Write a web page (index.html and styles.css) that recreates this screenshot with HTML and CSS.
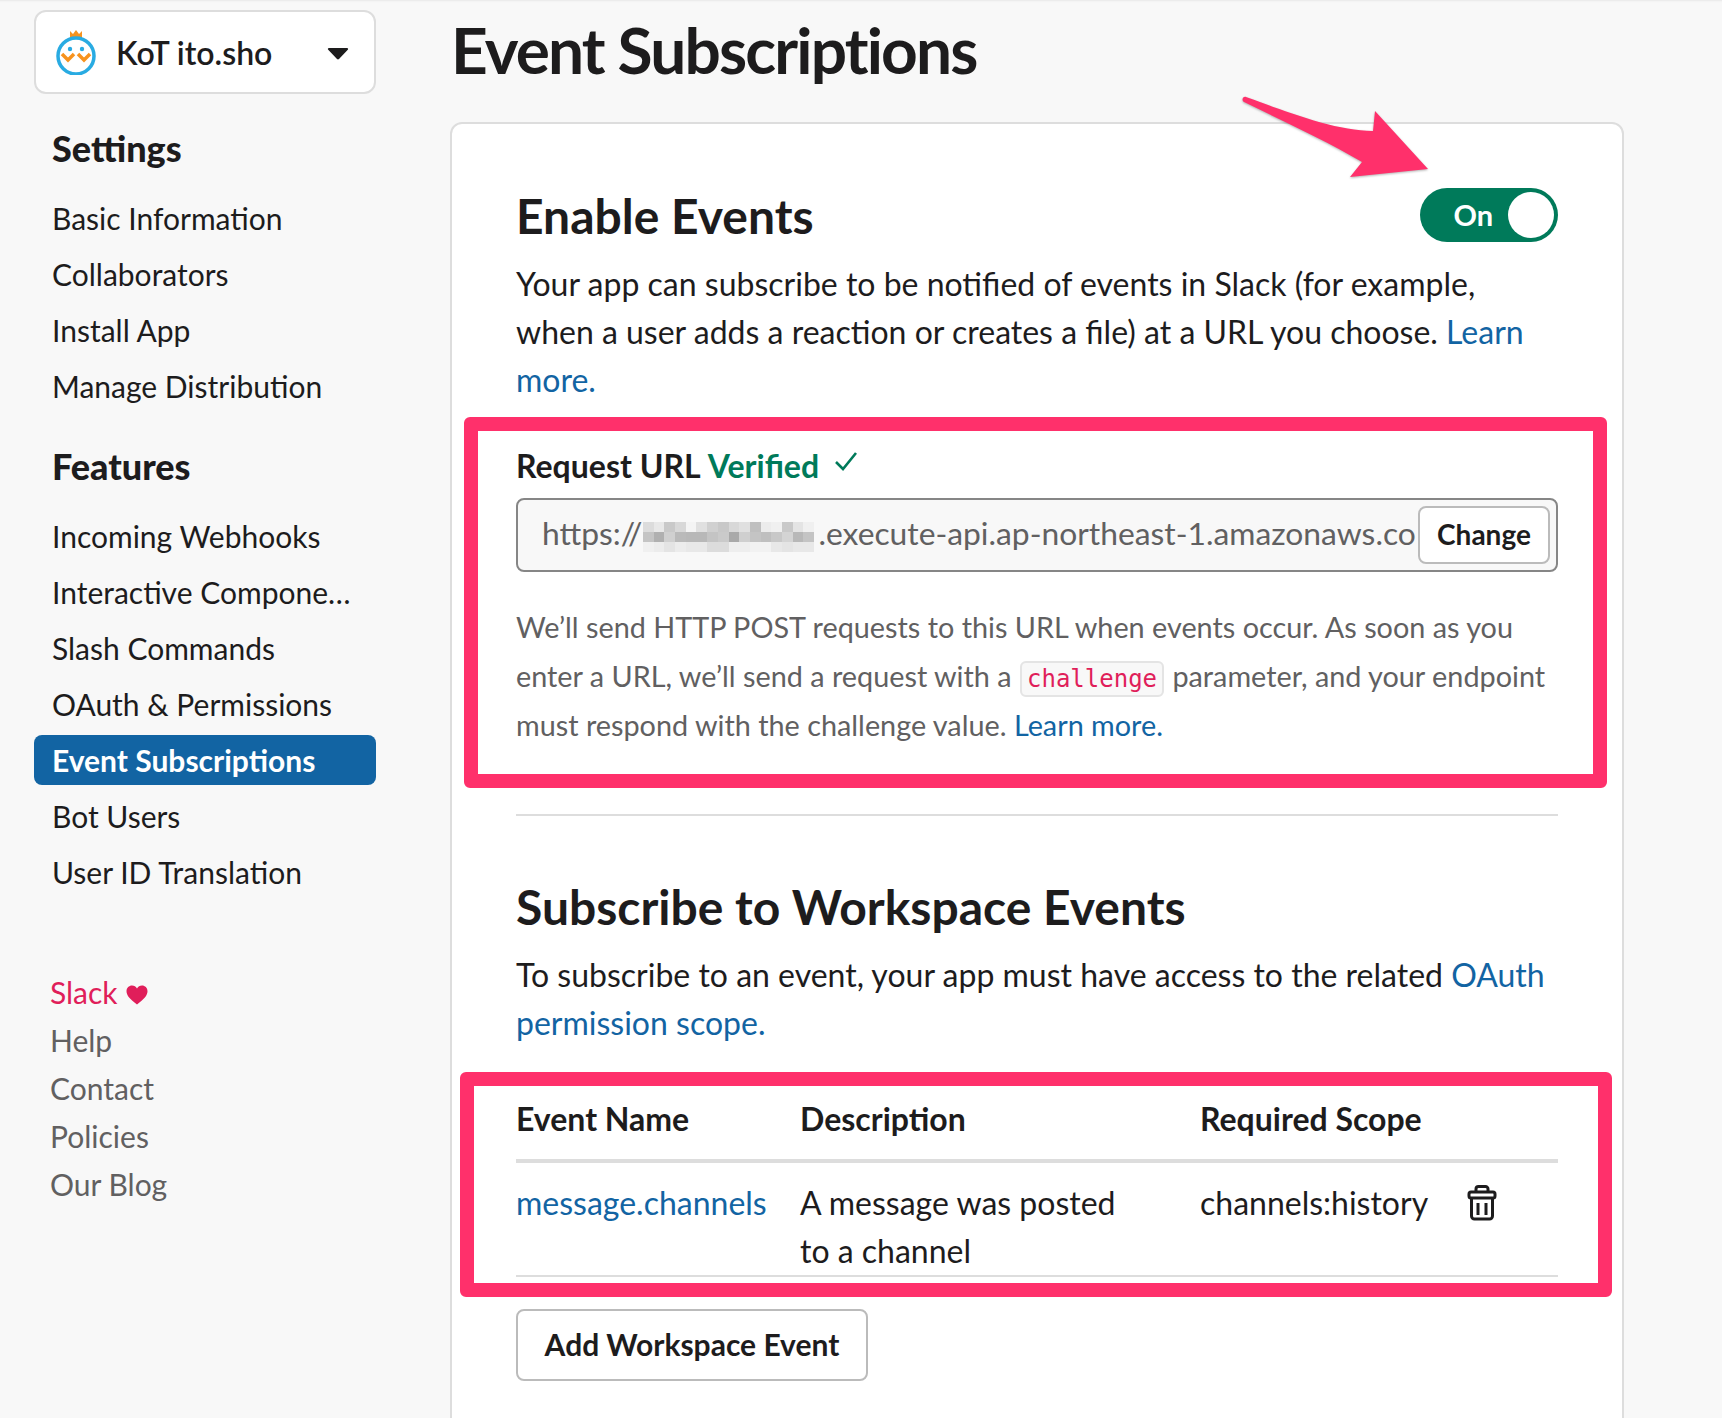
FILE: index.html
```html
<!DOCTYPE html>
<html lang="en">
  <head>
    <meta charset="UTF-8" />
    <title>Event Subscriptions</title>
    <link rel="stylesheet" href="styles.css">
  </head>
  <body>
    <div class="page">
      <aside class="sidebar">
        <div class="team">
          <svg class="team-logo" width="42" height="46" viewBox="0 0 42 46">
            <path d="M15 9V2l3 3 3-4 3 4 3-3v7z" fill="#f7931e" />
            <circle cx="21" cy="27" r="18" fill="#fff" stroke="#29abe2" stroke-width="3.500" />
            <circle cx="15" cy="20" r="2.200" fill="#29abe2" />
            <circle cx="27" cy="20" r="2.200" fill="#29abe2" />
            <path d="M7 25l6 6 6-6M23 25l6 6 6-6" fill="none" stroke="#f7931e" stroke-width="3.500" />
          </svg>
          <span class="team-name">KoT ito.sho</span>
          <svg class="caret" width="22" height="13" viewBox="0 0 22 13">
            <path d="M2 1h18c1 0 1.500 1 .8 1.700L12 12c-.6.6-1.400.6-2 0L1.200 2.700C.5 2 1 1 2 1z" fill="#1d1c1d" />
          </svg>
        </div>
        <h3 class="nav-title">Settings</h3>
        <ul class="nav">
          <li>Basic Information</li>
          <li>Collaborators</li>
          <li>Install App</li>
          <li>Manage Distribution</li>
        </ul>
        <h3 class="nav-title features">Features</h3>
        <ul class="nav">
          <li>Incoming Webhooks</li>
          <li>Interactive Compone…</li>
          <li>Slash Commands</li>
          <li>OAuth &amp; Permissions</li>
          <li class="active">Event Subscriptions</li>
          <li>Bot Users</li>
          <li>User ID Translation</li>
        </ul>
        <ul class="footer-links">
          <li class="slack">Slack <svg width="22" height="20" viewBox="0 0 22 20"><path d="M11 19.500C4 14 .5 10.500.5 6.200.5 2.800 3 .5 6 .5c2.200 0 4 1.100 5 3 1-1.900 2.800-3 5-3 3 0 5.500 2.300 5.500 5.700 0 4.300-3.500 7.800-10.500 13.300z" fill="#e01e5a" /></svg></li>
          <li>Help</li>
          <li>Contact</li>
          <li>Policies</li>
          <li>Our Blog</li>
        </ul>
      </aside>

      <main class="content">
        <h1>Event Subscriptions</h1>
        <div class="card">
          <section class="section">
            <div class="section-head">
              <h2>Enable Events</h2>
              <div class="toggle">
                <span>On</span>
                <i class="knob"></i>
              </div>
            </div>
            <p class="lead">Your app can subscribe to be notified of events in Slack (for example, when a user adds a reaction or creates a file) at a URL you choose. <a href="#">Learn more.</a></p>
            <div class="url-label">
              <strong>Request URL</strong> <span class="verified">Verified</span>
              <svg class="check" width="24" height="21" viewBox="0 0 24 21"><path d="M2 11l7 7L22 2" fill="none" stroke="#007a5a" stroke-width="2.600" /></svg>
            </div>
            <div class="url-box">
              <div class="url-text">https://<svg class="mosaic" width="171" height="30" viewBox="0 0 16 3" preserveAspectRatio="none" shape-rendering="crispEdges">
                  <rect x="0" y="0" width="1" height="1" fill="#dcdcdc" /><rect x="1" y="0" width="1" height="1" fill="#e8e8e8" /><rect x="2" y="0" width="1" height="1" fill="#c9c9c9" /><rect x="3" y="0" width="1" height="1" fill="#d8d8d8" />
                  <rect x="4" y="0" width="1" height="1" fill="#f4f4f4" /><rect x="5" y="0" width="1" height="1" fill="#e0e0e0" /><rect x="6" y="0" width="1" height="1" fill="#d0d0d0" /><rect x="7" y="0" width="1" height="1" fill="#c8c8c8" />
                  <rect x="8" y="0" width="1" height="1" fill="#d8d8d8" /><rect x="9" y="0" width="1" height="1" fill="#e0e0e0" /><rect x="10" y="0" width="1" height="1" fill="#bfbfbf" /><rect x="11" y="0" width="1" height="1" fill="#ececec" />
                  <rect x="12" y="0" width="1" height="1" fill="#f0f0f0" /><rect x="13" y="0" width="1" height="1" fill="#c9c9c9" /><rect x="14" y="0" width="1" height="1" fill="#e4e4e4" /><rect x="15" y="0" width="1" height="1" fill="#f0f0f0" />
                  <rect x="0" y="1" width="1" height="1" fill="#c4c4c4" /><rect x="1" y="1" width="1" height="1" fill="#b0b0b0" /><rect x="2" y="1" width="1" height="1" fill="#d0d0d0" /><rect x="3" y="1" width="1" height="1" fill="#bababa" />
                  <rect x="4" y="1" width="1" height="1" fill="#b8b8b8" /><rect x="5" y="1" width="1" height="1" fill="#b8b8b8" /><rect x="6" y="1" width="1" height="1" fill="#c4c4c4" /><rect x="7" y="1" width="1" height="1" fill="#cacaca" />
                  <rect x="8" y="1" width="1" height="1" fill="#a9a9a9" /><rect x="9" y="1" width="1" height="1" fill="#cfcfcf" /><rect x="10" y="1" width="1" height="1" fill="#c4c4c4" /><rect x="11" y="1" width="1" height="1" fill="#bfbfbf" />
                  <rect x="12" y="1" width="1" height="1" fill="#c8c8c8" /><rect x="13" y="1" width="1" height="1" fill="#d4d4d4" /><rect x="14" y="1" width="1" height="1" fill="#b8b8b8" /><rect x="15" y="1" width="1" height="1" fill="#c4c4c4" />
                  <rect x="0" y="2" width="1" height="1" fill="#f0f0f0" /><rect x="1" y="2" width="1" height="1" fill="#ececec" /><rect x="2" y="2" width="1" height="1" fill="#e4e4e4" /><rect x="3" y="2" width="1" height="1" fill="#ececec" />
                  <rect x="4" y="2" width="1" height="1" fill="#e8e8e8" /><rect x="5" y="2" width="1" height="1" fill="#e8e8e8" /><rect x="6" y="2" width="1" height="1" fill="#dcdcdc" /><rect x="7" y="2" width="1" height="1" fill="#dcdcdc" />
                  <rect x="8" y="2" width="1" height="1" fill="#eeeeee" /><rect x="9" y="2" width="1" height="1" fill="#eeeeee" /><rect x="10" y="2" width="1" height="1" fill="#f2f2f2" /><rect x="11" y="2" width="1" height="1" fill="#f2f2f2" />
                  <rect x="12" y="2" width="1" height="1" fill="#e8e8e8" /><rect x="13" y="2" width="1" height="1" fill="#e4e4e4" /><rect x="14" y="2" width="1" height="1" fill="#e8e8e8" /><rect x="15" y="2" width="1" height="1" fill="#e8e8e8" />
                </svg>.execute-api.ap-northeast-1.amazonaws.co</div>
              <button class="btn btn-small">Change</button>
            </div>
            <p class="hint">We’ll send HTTP POST requests to this URL when events occur. As soon as you enter a URL, we’ll send a request with a <code>challenge</code> parameter, and your endpoint must respond with the challenge value. <a href="#">Learn more.</a></p>
          </section>

          <section class="section section-events">
            <h2>Subscribe to Workspace Events</h2>
            <p class="lead">To subscribe to an event, your app must have access to the related <a href="#">OAuth permission scope.</a></p>
            <table class="events">
              <thead>
                <tr>
                  <th class="col-name">Event Name</th>
                  <th class="col-desc">Description</th>
                  <th class="col-scope">Required Scope</th>
                  <th></th>
                </tr>
              </thead>
              <tbody>
                <tr>
                  <td><a href="#">message.channels</a></td>
                  <td class="desc-cell">A message was posted to a channel</td>
                  <td>channels:history</td>
                  <td>
                    <svg class="trash" width="30" height="36" viewBox="0 0 30 36" fill="none" stroke="#1d1c1d" stroke-width="3">
                      <path d="M9 7V4a2.500 2.500 0 0 1 2.500-2.500h7A2.500 2.500 0 0 1 21 4v3" />
                      <rect x="2" y="7" width="26" height="6" rx="2" />
                      <path d="M4.500 13v18a3 3 0 0 0 3 3h15a3 3 0 0 0 3-3V13M11 18v12M19 18v12" />
                    </svg>
                  </td>
                </tr>
              </tbody>
            </table>
            <button class="btn btn-add">Add Workspace Event</button>
          </section>
        </div>
      </main>
    </div>

    <!-- annotations drawn on top of the screenshot -->
    <div class="mark mark-url"></div>
    <div class="mark mark-table"></div>
    <svg class="arrow" width="200" height="100" viewBox="0 0 200 100">
      <path d="M6 2C3 1 1 5 4 7 45 27 85 45 122 67L110 82 188 74 135 16 133 36C95 36 45 16 6 2z" fill="#ff306b" />
    </svg>
  </body>
</html>
```

FILE: styles.css
```css
* {
  box-sizing: border-box;
}
body {
  margin: 0;
  height: 1418px;
  overflow: hidden;
  position: relative;
  font-family: Lato, "Noto Sans", sans-serif;
  color: #1d1c1d;
  background: #f8f8f8;
  box-shadow: inset 0 3px 2px -2px #e8e8e8;
}
a {
  color: #1264a3;
  text-decoration: none;
}
ul {
  list-style: none;
  margin: 0;
  padding: 0;
}
.page {
  display: flex;
  padding: 10px 0 0 34px;
}

/* Sidebar */
.sidebar {
  width: 342px;
  flex-shrink: 0;
}
.team {
  display: flex;
  align-items: center;
  height: 84px;
  padding: 0 25px 0 19px;
  background: #fff;
  border: 2px solid #ddd;
  border-radius: 12px;
}
.team-name {
  flex: 1;
  margin-left: 19px;
  font-size: 32px;
  font-weight: 600;
}
.caret {
  margin-top: 3px;
}
.nav-title {
  margin: 32px 0 23px 18px;
  font-size: 36px;
  line-height: 44px;
  font-weight: 900;
}
.nav-title.features {
  margin-top: 33px;
}
.nav li {
  height: 50px;
  margin-bottom: 6px;
  padding-left: 18px;
  font-size: 30px;
  line-height: 50px;
  border-radius: 8px;
  white-space: nowrap;
}
.nav li.active {
  background: #1264a3;
  color: #fff;
  font-weight: 700;
}
.footer-links {
  margin: 71px 0 0 16px;
  font-size: 30px;
  line-height: 48px;
  color: #616061;
}
.footer-links .slack {
  color: #e01e5a;
}
.footer-links svg {
  vertical-align: -1px;
  margin-left: 1px;
}

/* Main column */
.content {
  width: 1174px;
  margin-left: 74px;
}
h1 {
  margin: -2px 0 0 1px;
  font-size: 64px;
  line-height: 84px;
  font-weight: 700;
  letter-spacing: -1.85px;
}
.card {
  margin-top: 30px;
  height: 1400px;
  padding: 0 64px;
  background: #fff;
  border: 2px solid #ddd;
  border-radius: 12px;
}
h2 {
  margin: 0;
  font-size: 48px;
  line-height: 60px;
  font-weight: 700;
}
.section {
  padding-top: 64px;
}
.section-head {
  display: flex;
  justify-content: space-between;
  align-items: center;
  height: 54px;
}
.section-head h2 {
  padding-top: 2px;
}
.toggle {
  display: flex;
  align-items: center;
  justify-content: flex-end;
  width: 138px;
  height: 54px;
  padding: 0 4px 1px 0;
  background: #007a5a;
  border-radius: 27px;
  color: #fff;
  font-size: 29px;
  font-weight: 700;
}
.knob {
  width: 46px;
  height: 46px;
  margin: 1px 0 0 15px;
  background: #fff;
  border-radius: 50%;
}
.lead {
  margin: 18px 0 0;
  font-size: 32px;
  line-height: 48px;
}
.url-label {
  margin-top: 38px;
  font-size: 32px;
  line-height: 48px;
}
.verified {
  margin-left: -1px;
  color: #007a5a;
  font-weight: 700;
}
.check {
  margin-left: 7px;
  vertical-align: 6px;
}
.url-box {
  display: flex;
  align-items: center;
  height: 74px;
  margin-top: 8px;
  padding: 0 6px 0 24px;
  background: #f8f8f8;
  border: 2px solid #868686;
  border-radius: 8px;
}
.url-text {
  flex: 1;
  overflow: hidden;
  white-space: nowrap;
  padding-bottom: 4px;
  font-size: 31.8px;
  color: #616061;
}
.mosaic {
  margin: 0 4px 0 1px;
  vertical-align: -7px;
}
.btn {
  font-family: inherit;
  font-weight: 700;
  color: #1d1c1d;
  background: #fff;
  border: 2px solid #bbb;
  border-radius: 8px;
}
.btn-small {
  width: 132px;
  height: 58px;
  margin-left: 2px;
  padding: 0 0 2px;
  font-size: 28px;
}
.btn-add {
  display: block;
  width: 352px;
  height: 72px;
  margin-top: 32px;
  padding: 0 0 2px;
  font-size: 30px;
}
.hint {
  margin: 31px 0 0;
  padding-bottom: 64px;
  border-bottom: 2px solid #ddd;
  font-size: 28.8px;
  line-height: 49px;
  color: #616061;
}
code {
  padding: 2px 5px;
  margin: 0 1px;
  font-family: "DejaVu Sans Mono", monospace;
  font-size: 24px;
  line-height: 1;
  color: #e01e5a;
  background: #f8f8f8;
  border: 2px solid #e4e4e4;
  border-radius: 6px;
}
.section-events {
  padding-top: 61px;
}
.section-events .lead {
  margin-top: 14px;
}
.events {
  width: 100%;
  margin-top: 43px;
  border-collapse: collapse;
  table-layout: fixed;
  font-size: 32px;
  line-height: 48px;
}
.events th {
  height: 71px;
  padding: 0 0 12px;
  text-align: left;
  font-weight: 700;
  border-bottom: 4px solid #ddd;
}
.events td {
  padding: 16px 0 0;
  vertical-align: top;
  border-bottom: 2px solid #ddd;
}
.events td.desc-cell {
  padding-right: 80px;
}
.col-name {
  width: 284px;
}
.col-desc {
  width: 400px;
}
.col-scope {
  width: 267px;
}
.trash {
  display: block;
  margin: 6px 0 0;
}

/* Annotations */
.mark {
  position: absolute;
  border: 14px solid #ff306b;
  border-radius: 6px;
}
.mark-url {
  left: 464px;
  top: 417px;
  width: 1143px;
  height: 371px;
}
.mark-table {
  left: 460px;
  top: 1072px;
  width: 1152px;
  height: 225px;
}
.arrow {
  position: absolute;
  left: 1240px;
  top: 95px;
  filter: drop-shadow(0 1px 1px rgba(0, 0, 0, 0.3));
}
```
